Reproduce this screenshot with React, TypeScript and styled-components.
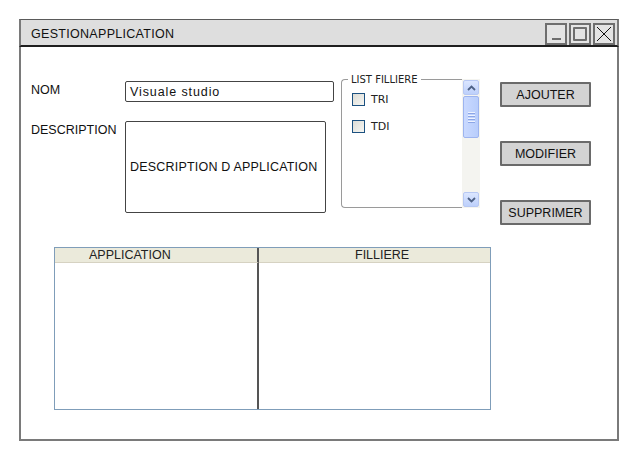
import React from "react";
import styled, {createGlobalStyle} from "styled-components";

const GlobalStyle = createGlobalStyle`
    body {
        margin: 0;
        background: #ffffff;
    }
`

const sketchFont = `"Comic Sans MS", "Liberation Sans", sans-serif`;
const uiFont = `"DejaVu Sans", "Liberation Sans", sans-serif`;

const Chevron = ({up}: {up?: boolean}) => (
    <svg width="9" height="6" viewBox="0 0 9 6">
        <path d={up ? "M1 5 L4.5 1.5 L8 5" : "M1 1 L4.5 4.5 L8 1"}
              fill="none" stroke="#4d6185" strokeWidth="1.8"/>
    </svg>
);

const App = () => {
    return <Page>
        <GlobalStyle/>
        <Window>
            <TitleBar>
                <Title>GESTIONAPPLICATION</Title>
                <Controls>
                    <Control><MinLine/></Control>
                    <Control><MaxBox/></Control>
                    <Control>
                        <svg width="18" height="18" viewBox="0 0 18 18">
                            <path d="M2 2 L16 16 M16 2 L2 16" stroke="#111" strokeWidth="1"/>
                        </svg>
                    </Control>
                </Controls>
            </TitleBar>

            <Content>
                <TopRow>
                    <Form>
                        <Label>NOM</Label>
                        <TextInput>Visuale studio</TextInput>
                        <Label>DESCRIPTION</Label>
                        <TextArea>DESCRIPTION D APPLICATION</TextArea>
                    </Form>

                    <ListBox>
                        <Group>
                            <Legend>LIST FILLIERE</Legend>
                            <CheckRow>
                                <CheckBox/>TRI
                            </CheckRow>
                            <CheckRow>
                                <CheckBox/>TDI
                            </CheckRow>
                        </Group>
                        <ScrollBar>
                            <ArrowButton><Chevron up/></ArrowButton>
                            <Thumb>
                                <Grip/><Grip/><Grip/><Grip/>
                            </Thumb>
                            <Track/>
                            <ArrowButton><Chevron/></ArrowButton>
                        </ScrollBar>
                    </ListBox>

                    <Actions>
                        <Button>AJOUTER</Button>
                        <Button>MODIFIER</Button>
                        <Button>SUPPRIMER</Button>
                    </Actions>
                </TopRow>

                <Table>
                    <HeaderCell first indent={34}>APPLICATION</HeaderCell>
                    <HeaderCell indent={96}>FILLIERE</HeaderCell>
                    <BodyCell first/>
                    <BodyCell/>
                </Table>
            </Content>
        </Window>
    </Page>
}

export default App;

const Page = styled.div`
    width: 639px;
    height: 461px;
    padding: 19px 0 0 19px;
    box-sizing: border-box;
`

const Window = styled.div`
    width: 600px;
    height: 422px;
    box-sizing: border-box;
    border: 2px solid #7a7a7a;
    border-top: none;
    display: flex;
    flex-direction: column;
`

const TitleBar = styled.div`
    height: 28px;
    margin: 0 -2px;
    background: #dedede;
    border-top: 1px solid #5a5a5a;
    border-left: 2px solid #7a7a7a;
    border-right: 2px solid #7a7a7a;
    border-bottom: 2px solid #1e1e1e;
    box-sizing: border-box;
    display: flex;
    align-items: center;
    justify-content: space-between;
    padding: 0 2px 0 10px;
    flex-shrink: 0;
`

const Title = styled.span`
    font-family: ${sketchFont};
    font-size: 12.5px;
    color: #111;
    letter-spacing: 0.3px;
    margin-top: 2px;
`

const Controls = styled.div`
    display: flex;
    gap: 2px;
    margin-top: 2px;
`

const Control = styled.div`
    width: 22px;
    height: 22px;
    box-sizing: border-box;
    border: 2px solid #6e6e6e;
    background: #e4e4e4;
    display: flex;
    align-items: center;
    justify-content: center;
`

const MinLine = styled.span`
    width: 9px;
    height: 2px;
    background: #6e6e6e;
    margin-top: 10px;
`

const MaxBox = styled.span`
    width: 10px;
    height: 10px;
    border: 2px solid #6e6e6e;
    border-radius: 1px;
`

const Content = styled.div`
    flex: 1;
    display: flex;
    flex-direction: column;
    padding: 31px 0 0 10px;
`

const TopRow = styled.div`
    display: flex;
    align-items: flex-start;
`

const Form = styled.div`
    width: 303px;
    margin-top: 3px;
    display: grid;
    grid-template-columns: 94px 1fr;
    row-gap: 19px;
    align-items: start;
    font-family: ${sketchFont};
    font-size: 12.5px;
    color: #111;
`

const Label = styled.div`
    padding-top: 2px;
`

const TextInput = styled.div`
    height: 21px;
    box-sizing: border-box;
    border: 1.5px solid #444;
    border-radius: 2px;
    padding: 3px 4px 0;
    background: #fff;
    letter-spacing: 0.9px;
`

const TextArea = styled.div`
    width: 201px;
    height: 92px;
    box-sizing: border-box;
    border: 1.5px solid #444;
    border-radius: 2px;
    padding: 0 4px;
    display: flex;
    align-items: center;
    background: #fff;
    letter-spacing: 0.2px;
`

const ListBox = styled.div`
    display: flex;
    margin-left: 7px;
    height: 130px;
`

const Group = styled.fieldset`
    width: 121px;
    margin: 0;
    padding: 8px 0 0 10px;
    box-sizing: border-box;
    border: 1px solid #9a9a9a;
    border-right: none;
    border-radius: 4px 0 0 4px;
    font-family: ${uiFont};
    font-size: 10px;
    color: #222;
    position: relative;
    top: -4px;
    height: 134px;
`

const Legend = styled.legend`
    padding: 0 3px;
    margin-left: -4px;
    font-size: 10px;
`

const CheckRow = styled.label`
    display: flex;
    align-items: center;
    gap: 6px;
    height: 13px;
    margin-bottom: 14px;
    font-size: 11px;
`

const CheckBox = styled.span`
    width: 13px;
    height: 13px;
    box-sizing: border-box;
    border: 1px solid #1c5180;
    background: linear-gradient(135deg, #dcdcd6, #f6f6f2);
`

const ScrollBar = styled.div`
    width: 18px;
    height: 129px;
    margin-top: 1px;
    background: #f4f4f0;
    display: flex;
    flex-direction: column;
    padding: 1px;
    box-sizing: border-box;
    gap: 1px;
`

const ArrowButton = styled.div`
    height: 13px;
    border: 1px solid #b7c8f3;
    border-radius: 2px;
    background: linear-gradient(#dbe6ff, #bdd0fb);
    display: flex;
    align-items: center;
    justify-content: center;
`

const Thumb = styled.div`
    height: 40px;
    border: 1px solid #9db4ef;
    border-radius: 2px;
    background: linear-gradient(90deg, #c9d9ff, #b8cdfb);
    display: flex;
    flex-direction: column;
    align-items: center;
    justify-content: center;
    gap: 1px;
`

const Grip = styled.span`
    width: 7px;
    height: 1px;
    background: #eef3ff;
    border-bottom: 1px solid #8ca6e6;
`

const Track = styled.div`
    flex: 1;
`

const Actions = styled.div`
    display: flex;
    flex-direction: column;
    gap: 34px;
    margin-left: 20px;
    margin-top: 4px;
`

const Button = styled.div`
    width: 91px;
    height: 25px;
    box-sizing: border-box;
    border: 2px solid #6a6a6a;
    border-radius: 1px;
    background: #d3d3d3;
    font-family: ${sketchFont};
    font-size: 12.5px;
    color: #111;
    display: flex;
    align-items: center;
    justify-content: center;
`

const Table = styled.div`
    width: 437px;
    height: 163px;
    margin: 22px 0 0 23px;
    box-sizing: border-box;
    border: 1px solid #7f9db9;
    display: grid;
    grid-template-columns: 204px 1fr;
    grid-template-rows: 15px 1fr;
`

const HeaderCell = styled.div<{first?: boolean; indent: number}>`
    background: #ebeadb;
    border-bottom: 1px solid #d6d2c2;
    border-right: ${props => props.first ? "2px solid #555" : "none"};
    padding-left: ${props => props.indent}px;
    font-family: ${sketchFont};
    font-size: 12.5px;
    color: #222;
    line-height: 15px;
    white-space: nowrap;
`

const BodyCell = styled.div<{first?: boolean}>`
    border-right: ${props => props.first ? "2px solid #555" : "none"};
    background: #fff;
`
